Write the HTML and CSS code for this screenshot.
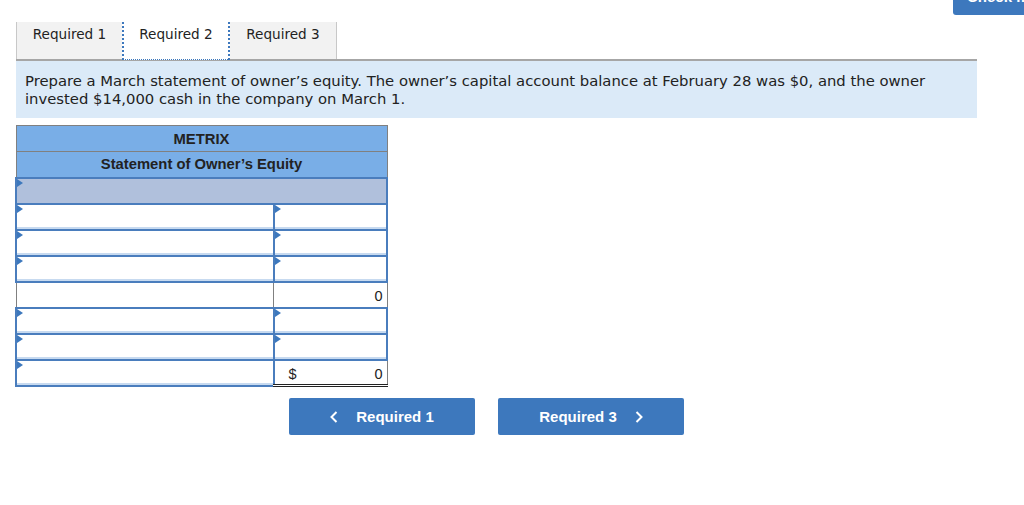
FILE: index.html
```html
<!DOCTYPE html>
<html>
<head>
<meta charset="utf-8">
<link rel="stylesheet" href="styles.css">
</head>
<body>
<div class="check-btn">Check my work</div>
<div class="page">
  <div class="tabs">
    <div class="tab tab-off tab-first">Required 1</div>
    <div class="tab tab-on">Required 2</div>
    <div class="tab tab-off tab-last">Required 3</div>
  </div>
  <div class="prompt">Prepare a March statement of owner’s equity. The owner’s capital account balance at February 28 was $0, and the owner invested $14,000 cash in the company on March 1.</div>

  <table class="stmt">
    <tr><td colspan="2" class="hdr">METRIX</td></tr>
    <tr><td colspan="2" class="hdr">Statement of Owner’s Equity</td></tr>
    <tr><td colspan="2" class="sub"><span class="flag"></span></td></tr>
    <tr><td class="c-l inp"><span class="flag"></span></td><td class="c-r inp"><span class="flag"></span></td></tr>
    <tr><td class="c-l inp"><span class="flag"></span></td><td class="c-r inp"><span class="flag"></span></td></tr>
    <tr><td class="c-l inp"><span class="flag"></span></td><td class="c-r inp"><span class="flag"></span></td></tr>
    <tr><td class="c-l plain"></td><td class="c-r plain total1"><span class="num">0</span></td></tr>
    <tr><td class="c-l inp"><span class="flag"></span></td><td class="c-r inp"><span class="flag"></span></td></tr>
    <tr><td class="c-l inp"><span class="flag"></span></td><td class="c-r inp"><span class="flag"></span></td></tr>
    <tr><td class="c-l inp"><span class="flag"></span></td><td class="c-r plain total2"><span class="cur">$</span><span class="num">0</span></td></tr>
  </table>

  <div class="nav">
    <div class="btn"><svg class="chev" width="8" height="12" viewBox="0 0 8 12"><path d="M6.5 1 L1.5 6 L6.5 11" fill="none" stroke="#fff" stroke-width="2"/></svg><span>Required 1</span></div>
    <div class="btn"><span>Required 3</span><svg class="chev" width="8" height="12" viewBox="0 0 8 12"><path d="M1.5 1 L6.5 6 L1.5 11" fill="none" stroke="#fff" stroke-width="2"/></svg></div>
  </div>
</div>
</body>
</html>
```

FILE: styles.css
```css
html, body {
  margin: 0;
  padding: 0;
  background: #fff;
}
body {
  position: relative;
  width: 1024px;
  height: 505px;
  overflow: hidden;
}
.check-btn {
  position: absolute;
  left: 953px;
  top: -22px;
  width: 71px;
  height: 37px;
  overflow: hidden;
  background: #3d78bd;
  border-radius: 3px 0 0 3px;
  color: #fff;
  font: bold 15px "Liberation Sans", Arial, sans-serif;
  line-height: 37px;
  padding-left: 14px;
  box-sizing: border-box;
  white-space: nowrap;
}
.page {
  padding: 22px 0 0 16px;
  width: 961px;
}
.tabs {
  display: flex;
  height: 37px;
  border-bottom: 2px solid #a6a6a6;
}
.tab {
  font: 13.6px "DejaVu Sans", Verdana, sans-serif;
  color: #222;
  line-height: 22px;
  padding-top: 1px;
  text-align: center;
  box-sizing: border-box;
  height: 37px;
}
.tab-off {
  background: #f2f2f2;
}
.tab-first {
  width: 106px;
  border-left: 1px solid #c8c8c8;
}
.tab-on {
  width: 108px;
  background: #fff;
  border-left: 2px dotted #3d78bd;
  border-right: 2px dotted #3d78bd;
  border-bottom: 1px dotted #3d78bd;
  height: 38px;
}
.tab-last {
  width: 107px;
  border-right: 1px solid #c8c8c8;
}
.prompt {
  background: #dbeaf8;
  height: 57px;
  box-sizing: border-box;
  padding: 11px 9px 0 9px;
  font: 14.8px "DejaVu Sans", Verdana, sans-serif;
  color: #222;
  line-height: 18px;
}
.stmt {
  margin-top: 7px;
  margin-left: -1px;
  border-collapse: collapse;
  width: 373px;
  font-family: "Liberation Sans", Arial, sans-serif;
  font-size: 14px;
  color: #222;
}
.stmt td {
  height: 26px;
  padding: 0;
  box-sizing: border-box;
  border: 1px solid #808080;
  position: relative;
}
.hdr {
  background: #79aee7;
  font-weight: bold;
  font-size: 14.8px;
  text-align: center;
  height: 26px;
}
.sub {
  background: #b0c0dc;
  border: 2px solid #4a7dbd !important;
}
.c-l {
  width: 259px;
}
.c-r {
  width: 114px;
}
.inp {
  background: #fff;
  border: 2px solid #4a7dbd !important;
  box-shadow: inset 0 -2px 0 #c7daf0;
}
.plain {
  background: #fff;
}
.total1 {
  border-top: 1px solid #222 !important;
}
.total2 {
  border-top: 1px solid #222 !important;
  border-bottom: 3px double #222 !important;
}
.flag {
  position: absolute;
  left: 0;
  top: 0;
  width: 0;
  height: 0;
  border-top: 4px solid transparent;
  border-bottom: 4px solid transparent;
  border-left: 6px solid #3d78bd;
}
.num {
  position: absolute;
  right: 4px;
  top: 5px;
  font-size: 14.5px;
}
.cur {
  position: absolute;
  left: 14px;
  top: 5px;
  font-size: 14.5px;
}
.nav {
  display: flex;
  gap: 23px;
  margin-top: 11px;
  margin-left: 273px;
}
.btn {
  width: 186px;
  height: 37px;
  background: #3d78bd;
  border-radius: 2px;
  color: #fff;
  font: bold 15px "Liberation Sans", Arial, sans-serif;
  display: flex;
  align-items: center;
  justify-content: center;
  gap: 18px;
}
```
